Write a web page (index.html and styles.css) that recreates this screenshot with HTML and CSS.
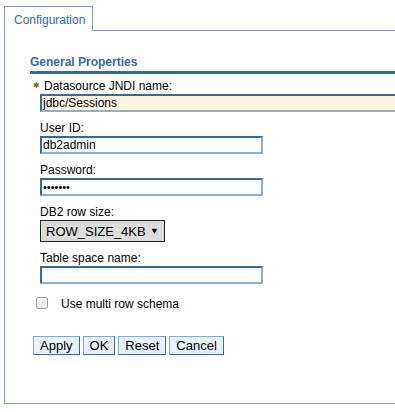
FILE: index.html
```html
<!DOCTYPE html>
<html>
<head>
<meta charset="utf-8">
<link rel="stylesheet" href="styles.css">
</head>
<body>
<div class="frame">
  <div class="tabrow">
    <div class="tab">Configuration</div>
    <div class="tabfill"></div>
  </div>
  <div class="panel">
    <div class="section">
      <h2 class="heading">General Properties</h2>
      <div class="field first">
        <label class="label req"><span class="star">&#x2731;</span>Datasource JNDI name:</label>
        <div class="input wide required">jdbc/Sessions</div>
      </div>
      <div class="field">
        <label class="label">User ID:</label>
        <div class="input">db2admin</div>
      </div>
      <div class="field">
        <label class="label">Password:</label>
        <div class="input pw">&#8226;&#8226;&#8226;&#8226;&#8226;&#8226;&#8226;</div>
      </div>
      <div class="field">
        <label class="label">DB2 row size:</label>
        <div class="select"><span>ROW_SIZE_4KB</span><span class="caret">&#9660;</span></div>
      </div>
      <div class="field">
        <label class="label">Table space name:</label>
        <div class="input"></div>
      </div>
      <div class="check">
        <span class="box"></span>
        <span class="checklabel">Use multi row schema</span>
      </div>
      <div class="buttons">
        <button class="btn">Apply</button>
        <button class="btn">OK</button>
        <button class="btn">Reset</button>
        <button class="btn">Cancel</button>
      </div>
    </div>
  </div>
</div>
</body>
</html>
```
FILE: styles.css
```css
html, body { margin: 0; padding: 0; background: #fff; overflow: hidden; }
body { font-family: "Liberation Sans", Arial, sans-serif; font-size: 12px; color: #000; }
.frame { padding: 6px 0 0 4px; }
.tabrow { display: flex; height: 25px; }
.tab {
  box-sizing: border-box; width: 89px; height: 25px;
  border: 1px solid #819fd4; border-bottom: none;
  color: #2e6ea8; font-size: 12px; padding: 7px 0 0 9px; line-height: 12px;
}
.tabfill { flex: 1; border-bottom: 1px solid #819fd4; }
.panel {
  border-left: 1px solid #819fd4; border-bottom: 1px solid #819fd4;
  height: 373px; box-sizing: border-box;
}
.section { padding: 24px 0 0 25px; }
.heading {
  margin: 0; font-size: 12px; font-weight: bold; color: #3a6b9b;
  line-height: 14px; padding-bottom: 2px; border-bottom: 3px solid #386a98;
}
.field { margin: 9px 0 0 10px; display: flex; flex-direction: column; align-items: flex-start; }
.field.first { margin: 4px 0 0 0; }
.label { font-size: 12px; line-height: 15px; }
.req { padding-left: 3px; }
.star { color: #7a6a20; font-size: 8px; margin-right: 4px; vertical-align: 2px; }
.input {
  box-sizing: border-box; width: 223px; height: 18px;
  border: 2px solid #8cafd2; border-top-color: #386a98; border-left-color: #386a98;
  font-size: 12px; line-height: 14px; padding: 0 0 0 1px; background: #fff;
}
.field.first .input { margin-left: 10px; }
.wide { width: auto; align-self: stretch; border-right: none; }
.required { background: #fef6df; }
.pw { font-size: 11px; letter-spacing: 0; }
.select {
  box-sizing: border-box; width: 125px; height: 22px;
  background: #dcdcdc; border: 1px solid #222;
  display: flex; justify-content: space-between; align-items: center;
  padding: 0 5px 0 5px; font-size: 13px;
}
.caret { font-size: 9px; }
.check { display: flex; align-items: center; margin: 13px 0 0 6px; height: 12px; }
.box {
  box-sizing: border-box; width: 12px; height: 12px; border: 1px solid #a5a5a5; border-radius: 2px;
  background: linear-gradient(#fafafa, #e6e6e6);
}
.checklabel { margin-left: 13px; font-size: 12px; position: relative; top: 1px; }
.buttons { display: flex; gap: 3px; margin: 27px 0 0 3px; }
.btn {
  font-family: "Liberation Sans", Arial, sans-serif; font-size: 13px;
  box-sizing: border-box; height: 19px; padding: 0 6px; background: #e8f0fb;
  border: 1px solid #86a9cf; border-right-color: #3c6a98; border-bottom-color: #3c6a98;
  line-height: 15px; color: #000;
}
```
